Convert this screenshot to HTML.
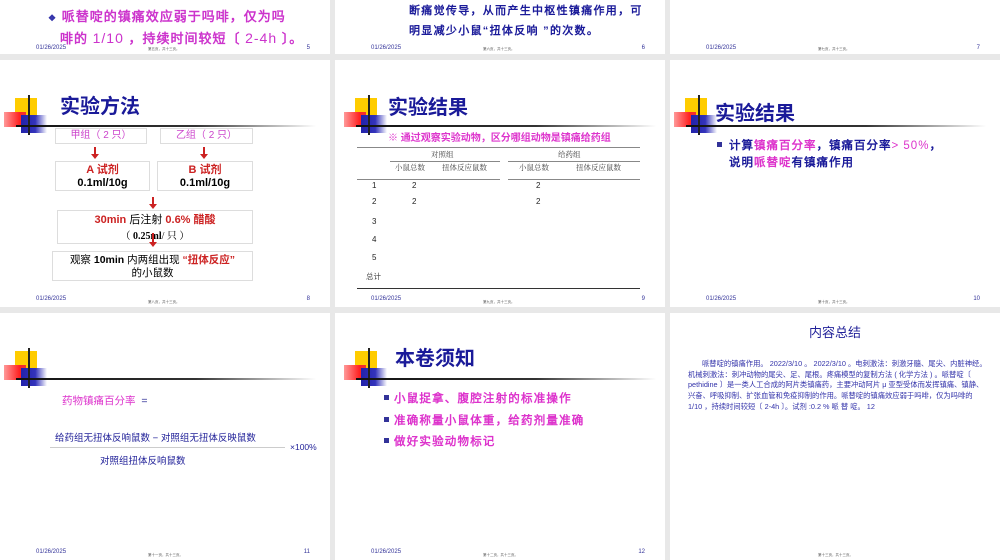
<!DOCTYPE html>
<html><head><meta charset="utf-8"><style>
*{margin:0;padding:0;box-sizing:border-box}
body{width:1000px;height:556px;background:#e8e8e8;position:relative;overflow:hidden;font-family:"Liberation Sans","Noto Sans CJK SC",sans-serif}
.s{position:absolute;width:330px;height:247px;background:#fff;overflow:hidden}
.a{position:absolute;white-space:nowrap}
.date{position:absolute;left:36px;top:236px;font-size:6px;color:#333399}
.mid{position:absolute;left:148px;top:240px;font-size:3.5px;color:#555}
.num{position:absolute;right:20px;top:236px;font-size:6px;color:#333399}
.y{position:absolute;left:15px;top:38px;width:22px;height:19px;background:#ffcc00}
.r{position:absolute;left:4px;top:52px;width:22px;height:15px;background:linear-gradient(90deg,#ff9999,#ff2222 70%,#ee3333)}
.b{position:absolute;left:21px;top:55px;width:26px;height:18px;background:linear-gradient(90deg,#2222aa,#3333bb 55%,rgba(80,80,200,0))}
.v{position:absolute;left:28px;top:35px;width:1.5px;height:40px;background:#222}
.h{position:absolute;left:16px;top:65px;width:300px;height:1.5px;background:linear-gradient(90deg,#111,#333 60%,rgba(0,0,0,0))}
.t{position:absolute;font-size:20px;color:#1a1a99;font-weight:bold;font-family:"Noto Sans CJK SC",sans-serif}
.box{position:absolute;border:1px solid #ddd;text-align:center;font-weight:bold}
.ar{position:absolute;width:2px;background:#cc2222}
.ar:after{content:"";position:absolute;left:-3px;bottom:-3px;border-left:4px solid transparent;border-right:4px solid transparent;border-top:5px solid #cc2222}
.ln{position:absolute;height:1px;background:#888}
.td{position:absolute;font-size:8px;color:#222}
.th{position:absolute;font-size:7.5px;color:#444;font-family:"Noto Serif CJK SC",serif}
.bl{position:absolute;width:5px;height:5px;background:#333399}
.mg{color:#dd33cc}
</style></head><body>

<!-- row1 -->
<div class="s" style="left:0;top:-193px">
<div class="a" style="left:48px;top:199px;font-size:13px;color:#cc33cc;font-weight:bold;font-family:'WenQuanYi Zen Hei',sans-serif;letter-spacing:1px"><span style="color:#3333aa;font-size:9px">❖</span> 哌替啶的镇痛效应弱于吗啡，仅为吗</div>
<div class="a" style="left:60px;top:221px;font-size:13px;color:#cc33cc;font-weight:bold;font-family:'WenQuanYi Zen Hei',sans-serif;letter-spacing:1px">啡的 <span style="font-weight:normal;font-size:14px">1/10</span> ，持续时间较短〔 <span style="font-weight:normal;font-size:14px">2-4h</span> 〕。</div>
<div class="date" style="top:238px">01/26/2025</div><div class="mid">第五页，共十三页。</div><div class="num" style="top:238px">5</div>
</div>
<div class="s" style="left:335px;top:-193px">
<div class="a" style="left:74px;top:195px;font-size:11px;color:#1a1a99;font-weight:bold;font-family:'WenQuanYi Zen Hei',sans-serif;letter-spacing:1.3px">断痛觉传导，从而产生中枢性镇痛作用，可</div>
<div class="a" style="left:74px;top:215px;font-size:11px;color:#1a1a99;font-weight:bold;font-family:'WenQuanYi Zen Hei',sans-serif;letter-spacing:1.3px">明显减少小鼠“扭体反响 ”的次数。</div>
<div class="date" style="top:238px">01/26/2025</div><div class="mid">第六页，共十三页。</div><div class="num" style="top:238px">6</div>
</div>
<div class="s" style="left:670px;top:-193px">
<div class="date" style="top:238px">01/26/2025</div><div class="mid">第七页，共十三页。</div><div class="num" style="top:238px">7</div>
</div>

<!-- row2 -->
<div class="s" style="left:0;top:60px">
<div class="y"></div><div class="r"></div><div class="b"></div><div class="v"></div><div class="h"></div>
<div class="t" style="left:60px;top:30px">实验方法</div>
<div class="box" style="left:55px;top:68px;width:92px;height:16px;font-size:10px;color:#cc44cc;font-weight:normal;line-height:14px">甲组（ 2 只）</div>
<div class="box" style="left:160px;top:68px;width:93px;height:16px;font-size:10px;color:#cc44cc;font-weight:normal;line-height:14px">乙组（ 2 只）</div>
<div class="ar" style="left:94px;top:87px;height:9px"></div>
<div class="ar" style="left:203px;top:87px;height:9px"></div>
<div class="box" style="left:55px;top:101px;width:95px;height:30px;font-size:11px;line-height:13px;padding-top:2px"><span style="color:#cc2222">A 试剂</span><br>0.1ml/10g</div>
<div class="box" style="left:157px;top:101px;width:96px;height:30px;font-size:11px;line-height:13px;padding-top:2px"><span style="color:#cc2222">B 试剂</span><br>0.1ml/10g</div>
<div class="ar" style="left:152px;top:137px;height:9px"></div>
<div class="box" style="left:57px;top:150px;width:196px;height:34px;font-size:11px;line-height:16px;padding-top:1px"><span style="color:#cc2222">30min</span> <span style="font-weight:normal">后注射</span> <span style="color:#cc2222">0.6% 醋酸</span><br><span style="font-weight:normal;font-size:10px;font-family:'Liberation Serif','Noto Serif CJK SC',serif">（ <b>0.25ml</b>/ 只 ）</span></div>
<div class="ar" style="left:152px;top:173px;height:11px"></div>
<div class="box" style="left:52px;top:191px;width:201px;height:30px;font-size:10.5px;line-height:13px;padding-top:2px"><span style="font-weight:normal">观察</span> 10min <span style="font-weight:normal">内两组出现</span> <span style="color:#cc2222">“扭体反应”</span><br><span style="font-weight:normal">的小鼠数</span></div>
<div class="date">01/26/2025</div><div class="mid">第八页，共十三页。</div><div class="num">8</div>
</div>

<div class="s" style="left:335px;top:60px">
<div class="y" style="left:20px"></div><div class="r" style="left:9px"></div><div class="b" style="left:26px"></div><div class="v" style="left:33px"></div><div class="h" style="left:21px"></div>
<div class="t" style="left:53px;top:31px">实验结果</div>
<div class="a" style="left:53px;top:69px;font-size:10px;color:#dd33cc;font-weight:bold">※ 通过观察实验动物，区分哪组动物是镇痛给药组</div>
<div class="ln" style="left:22px;top:87px;width:283px"></div>
<div class="th" style="left:96px;top:89px">对照组</div><div class="th" style="left:223px;top:89px">给药组</div>
<div class="ln" style="left:55px;top:101px;width:110px"></div><div class="ln" style="left:173px;top:101px;width:132px"></div>
<div class="th" style="left:60px;top:102px">小鼠总数</div><div class="th" style="left:107px;top:102px">扭体反应鼠数</div>
<div class="th" style="left:184px;top:102px">小鼠总数</div><div class="th" style="left:241px;top:102px">扭体反应鼠数</div>
<div class="ln" style="left:22px;top:119px;width:143px"></div><div class="ln" style="left:173px;top:119px;width:132px"></div>
<div class="td" style="left:37px;top:121px">1</div><div class="td" style="left:77px;top:121px">2</div><div class="td" style="left:201px;top:121px">2</div>
<div class="td" style="left:37px;top:137px">2</div><div class="td" style="left:77px;top:137px">2</div><div class="td" style="left:201px;top:137px">2</div>
<div class="td" style="left:37px;top:157px">3</div>
<div class="td" style="left:37px;top:175px">4</div>
<div class="td" style="left:37px;top:193px">5</div>
<div class="td" style="left:31px;top:211px;font-size:7.5px;color:#444">总计</div>
<div class="ln" style="left:22px;top:228px;width:283px;background:#333"></div>
<div class="date">01/26/2025</div><div class="mid">第九页，共十三页。</div><div class="num">9</div>
</div>

<div class="s" style="left:670px;top:60px">
<div class="y" style="left:15px"></div><div class="r" style="left:4px"></div><div class="b" style="left:21px"></div><div class="v" style="left:28px"></div><div class="h" style="left:16px"></div>
<div class="t" style="left:45px;top:37px">实验结果</div>
<div class="bl" style="left:47px;top:82px"></div>
<div class="a" style="left:59px;top:77px;font-size:11.5px;color:#1a1a99;font-weight:bold;font-family:'WenQuanYi Zen Hei',sans-serif;letter-spacing:1px">计算<span class="mg">镇痛百分率</span>，镇痛百分率<span class="mg" style="font-weight:normal;font-family:'Liberation Sans',sans-serif">&gt; 50%</span>，</div>
<div class="a" style="left:59px;top:94px;font-size:11.5px;color:#1a1a99;font-weight:bold;font-family:'WenQuanYi Zen Hei',sans-serif;letter-spacing:1px">说明<span class="mg">哌替啶</span>有镇痛作用</div>
<div class="date">01/26/2025</div><div class="mid">第十页，共十三页。</div><div class="num">10</div>
</div>

<!-- row3 -->
<div class="s" style="left:0;top:313px">
<div class="y"></div><div class="r"></div><div class="b"></div><div class="v"></div><div class="h"></div>
<div class="a" style="left:62px;top:80px;font-size:10.5px;color:#dd33cc">药物镇痛百分率 <span style="color:#333399">&nbsp;=</span></div>
<div class="a" style="left:55px;top:117px;font-size:9.5px;color:#222299">给药组无扭体反响鼠数 − 对照组无扭体反映鼠数</div>
<div class="ln" style="left:50px;top:134px;width:235px;background:#ccc"></div>
<div class="a" style="left:290px;top:129px;font-size:8.5px;color:#222299">×100%</div>
<div class="a" style="left:100px;top:140px;font-size:9.5px;color:#222299">对照组扭体反响鼠数</div>
<div class="date">01/26/2025</div><div class="mid">第十一页，共十三页。</div><div class="num">11</div>
</div>

<div class="s" style="left:335px;top:313px">
<div class="y" style="left:20px"></div><div class="r" style="left:9px"></div><div class="b" style="left:26px"></div><div class="v" style="left:33px"></div><div class="h" style="left:21px"></div>
<div class="t" style="left:60px;top:29px">本卷须知</div>
<div class="bl" style="left:49px;top:82px"></div>
<div class="a mg" style="left:59px;top:77px;font-size:11.5px;font-weight:bold;font-family:'WenQuanYi Zen Hei',sans-serif;letter-spacing:1.2px">小鼠捉拿、腹腔注射的标准操作</div>
<div class="bl" style="left:49px;top:104px"></div>
<div class="a mg" style="left:59px;top:99px;font-size:11.5px;font-weight:bold;font-family:'WenQuanYi Zen Hei',sans-serif;letter-spacing:1.2px">准确称量小鼠体重，给药剂量准确</div>
<div class="bl" style="left:49px;top:125px"></div>
<div class="a mg" style="left:59px;top:120px;font-size:11.5px;font-weight:bold;font-family:'WenQuanYi Zen Hei',sans-serif;letter-spacing:1.2px">做好实验动物标记</div>
<div class="date">01/26/2025</div><div class="mid">第十二页，共十三页。</div><div class="num">12</div>
</div>

<div class="s" style="left:670px;top:313px">
<div class="a" style="left:0;width:330px;text-align:center;top:9px;font-size:13px;color:#222299">内容总结</div>
<div style="position:absolute;left:18px;top:46px;width:300px;font-size:7.3px;line-height:10.7px;color:#3333aa;text-indent:14px">哌替啶的镇痛作用。 2022/3/10 。 2022/3/10 。电刺激法：刺激牙髓、尾尖、内脏神经。机械刺激法：刺冲动物的尾尖、足、尾根。疼痛模型的复制方法 ( 化学方法 ) 。哌替啶〔 pethidine 〕是一类人工合成的阿片类镇痛药，主要冲动阿片 μ 亚型受体而发挥镇痛、镇静、兴奋、呼吸抑制、扩张血管和免疫抑制的作用。哌替啶的镇痛效应弱于吗啡，仅为吗啡的 1/10 ，持续时间较短〔 2-4h 〕。试剂 :0.2 % 哌 替 啶。 12</div>
<div class="mid">第十三页，共十三页。</div>
</div>
</body></html>
